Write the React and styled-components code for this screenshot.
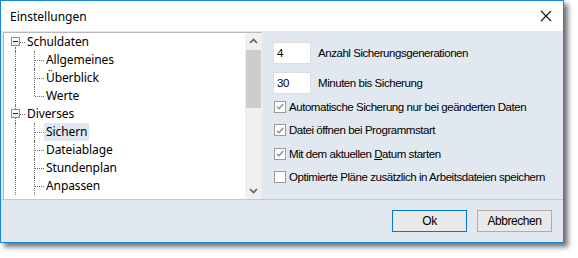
import styled, { createGlobalStyle, css } from 'styled-components'

const GlobalStyle = createGlobalStyle`
    html, body {
        margin: 0;
        padding: 0;
        background: #ffffff;
    }
    body {
        width: 578px;
        height: 258px;
        overflow: hidden;
        font-family: "Noto Sans", "Open Sans", sans-serif;
    }
`

const ui = css`
    font-family: "Liberation Sans", Arial, sans-serif;
    font-size: 11.5px;
    letter-spacing: -0.45px;
    color: #000;
    white-space: nowrap;
`

const Window = styled.div`
    box-sizing: border-box;
    width: 564px;
    height: 243px;
    border: 1px solid #1883d7;
    background: #e2e8f0;
    box-shadow: 4px 4px 5px rgba(0, 0, 0, 0.55);
    display: flex;
    flex-direction: column;
`

const TitleBar = styled.div`
    height: 30px;
    flex: none;
    background: #fff;
    display: flex;
    align-items: center;
    justify-content: space-between;
    padding: 0 10px 0 9px;
    font-family: "Noto Sans", "Open Sans", sans-serif;
    font-size: 12px;
    color: #000;
`

const Close = styled.svg`
    width: 12px;
    height: 12px;
    margin-right: 1px;
`

const Content = styled.div`
    display: flex;
    height: 167px;
    flex: none;
    padding: 1px 0 0 2px;
    border-bottom: 1px solid #c8c8c8;
`

const Tree = styled.div`
    width: 258px;
    display: flex;
    background: #fff;
    border-top: 1px solid #b9b9b9;
    border-left: 1px solid #b9b9b9;
`

const List = styled.div`
    flex: 1;
    overflow: hidden;
`

const Row = styled.div`
    display: flex;
    height: 18px;
    align-items: stretch;
`

const Guide = styled.div`
    position: relative;
    flex: none;
    width: ${p => p.$w}px;

    &::before {
        content: '';
        position: absolute;
        left: 11px;
        border-left: 1px dotted #6f6f6f;
        ${p => p.$v === 'full' && css`top: 0; bottom: 0;`}
        ${p => p.$v === 'top' && css`top: 0; height: 9px;`}
        ${p => p.$v === 'root' && css`top: 0; bottom: 0;`}
        ${p => p.$v === 'down' && css`top: 14px; bottom: 0;`}
        ${p => !p.$v && css`display: none;`}
    }

    &::after {
        content: '';
        position: absolute;
        top: 9px;
        left: ${p => (p.$box ? 16 : 12)}px;
        right: 0;
        border-top: 1px dotted #6f6f6f;
        ${p => !p.$h && css`display: none;`}
    }
`

const Box = styled.span`
    position: absolute;
    z-index: 1;
    left: 7px;
    top: 4px;
    box-sizing: border-box;
    width: 9px;
    height: 9px;
    border: 1px solid #919191;
    background: linear-gradient(#ffffff, #e8e8e8);
    display: flex;
    align-items: center;
    justify-content: center;

    &::after {
        content: '';
        width: 5px;
        height: 1px;
        background: #2b2b2b;
    }
`

const Label = styled.span`
    padding: 0 2px;
    font-size: 12px;
    line-height: 18px;
    letter-spacing: -0.1px;
    color: #000;
    background: ${p => (p.$selected ? '#dfe7f1' : 'transparent')};
    white-space: nowrap;
`

const Scrollbar = styled.div`
    width: 17px;
    flex: none;
    background: #f0f0f0;
    display: flex;
    flex-direction: column;
    align-items: center;
`

const Arrow = styled.svg`
    width: 17px;
    height: 17px;
    flex: none;
`

const Thumb = styled.div`
    width: 15px;
    height: 58px;
    flex: none;
    background: #cdcdcd;
`

const Track = styled.div`
    flex: 1;
`

const Options = styled.div`
    flex: 1;
    padding: 10px 0 0 11px;
    display: flex;
    flex-direction: column;
`

const Fields = styled.div`
    display: flex;
    flex-direction: column;
    gap: 8px;
    margin-bottom: 1px;
`

const FieldRow = styled.div`
    display: flex;
    align-items: center;
    gap: 7px;
    height: 22px;
    ${ui}
`

const NumberBox = styled.div`
    box-sizing: border-box;
    width: 38px;
    height: 22px;
    background: #fff;
    border: 1px solid #dadde2;
    padding: 3px 0 0 3px;
    line-height: 14px;
    ${ui}
`

const CheckRow = styled.label`
    display: flex;
    align-items: center;
    gap: 3px;
    height: 23.5px;
    padding-left: 1px;
    ${ui}
`

const Check = styled.span`
    box-sizing: border-box;
    width: 12px;
    height: 12px;
    flex: none;
    border: 1px solid #9a9a9a;
    background: #fff;
    display: flex;
    align-items: center;
    justify-content: center;
`

const Footer = styled.div`
    flex: 1;
    display: flex;
    justify-content: flex-end;
    align-items: flex-start;
    gap: 10px;
    padding: 10px 11px 0 0;
`

const Button = styled.button`
    box-sizing: border-box;
    width: 75px;
    height: 22px;
    background: #e9e9e9;
    border: 1px solid ${p => (p.$default ? '#0078d7' : '#adadad')};
    padding: 0;
    ${ui}
    font-size: 12px;
`

const tree = [
    { text: 'Schuldaten', root: true, first: true },
    { text: 'Allgemeines' },
    { text: 'Überblick' },
    { text: 'Werte', last: true },
    { text: 'Diverses', root: true },
    { text: 'Sichern', selected: true },
    { text: 'Dateiablage' },
    { text: 'Stundenplan' },
    { text: 'Anpassen' },
]

function TreeRow({ item }) {
    if (item.root) {
        return (
            <Row>
                <Guide $w={21} $v={item.first ? 'down' : 'root'} $h $box>
                    <Box />
                </Guide>
                <Label>{item.text}</Label>
            </Row>
        )
    }
    return (
        <Row>
            <Guide $w={19} $v="full" />
            <Guide $w={21} $v={item.last ? 'top' : 'full'} $h />
            <Label $selected={item.selected}>{item.text}</Label>
        </Row>
    )
}

function CheckMark({ checked }) {
    return (
        <Check>
            {checked && (
                <svg width="8" height="7" viewBox="0 0 8 7">
                    <path d="M0.8 3.6 L3 5.8 L7.2 1" fill="none" stroke="#8a8a8a" strokeWidth="1.3" />
                </svg>
            )}
        </Check>
    )
}

function App() {
    return (
        <>
            <GlobalStyle />
            <Window>
                <TitleBar>
                    <span>Einstellungen</span>
                    <Close viewBox="0 0 12 12">
                        <path d="M1 1 L11 11 M11 1 L1 11" stroke="#111" strokeWidth="1.1" />
                    </Close>
                </TitleBar>
                <Content>
                    <Tree>
                        <List>
                            {tree.map(item => <TreeRow key={item.text} item={item} />)}
                        </List>
                        <Scrollbar>
                            <Arrow viewBox="0 0 17 17">
                                <path d="M5 10 L8.5 6.5 L12 10" fill="none" stroke="#606060" strokeWidth="1.6" />
                            </Arrow>
                            <Thumb />
                            <Track />
                            <Arrow viewBox="0 0 17 17">
                                <path d="M5 7 L8.5 10.5 L12 7" fill="none" stroke="#606060" strokeWidth="1.6" />
                            </Arrow>
                        </Scrollbar>
                    </Tree>
                    <Options>
                        <Fields>
                            <FieldRow>
                                <NumberBox>4</NumberBox>
                                <span>Anzahl Sicherungsgenerationen</span>
                            </FieldRow>
                            <FieldRow>
                                <NumberBox>30</NumberBox>
                                <span>Minuten bis Sicherung</span>
                            </FieldRow>
                        </Fields>
                        <CheckRow>
                            <CheckMark checked />
                            Automatische Sicherung nur bei geänderten Daten
                        </CheckRow>
                        <CheckRow>
                            <CheckMark checked />
                            Datei öffnen bei Programmstart
                        </CheckRow>
                        <CheckRow>
                            <CheckMark checked />
                            <span>Mit dem aktuellen <u>D</u>atum starten</span>
                        </CheckRow>
                        <CheckRow>
                            <CheckMark />
                            Optimierte Pläne zusätzlich in Arbeitsdateien speichern
                        </CheckRow>
                    </Options>
                </Content>
                <Footer>
                    <Button $default>Ok</Button>
                    <Button>Abbrechen</Button>
                </Footer>
            </Window>
        </>
    )
}

export default App
